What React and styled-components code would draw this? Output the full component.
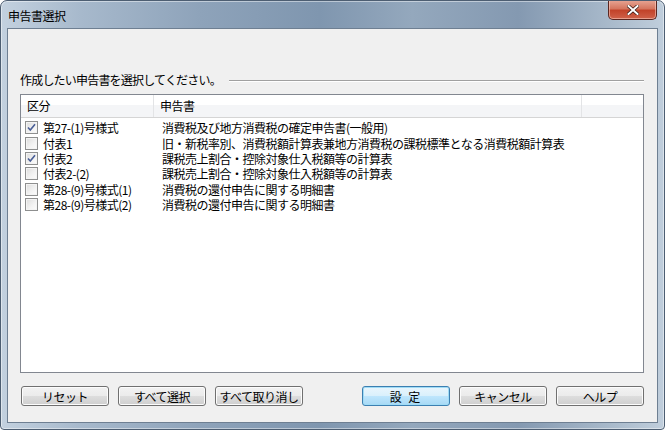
import React from 'react'
import styled, { createGlobalStyle } from 'styled-components'

const rows = [
  { kind: '第27-(1)号様式', name: '消費税及び地方消費税の確定申告書(一般用)', checked: true },
  { kind: '付表1', name: '旧・新税率別、消費税額計算表兼地方消費税の課税標準となる消費税額計算表', checked: false },
  { kind: '付表2', name: '課税売上割合・控除対象仕入税額等の計算表', checked: true },
  { kind: '付表2-(2)', name: '課税売上割合・控除対象仕入税額等の計算表', checked: false },
  { kind: '第28-(9)号様式(1)', name: '消費税の還付申告に関する明細書', checked: false },
  { kind: '第28-(9)号様式(2)', name: '消費税の還付申告に関する明細書', checked: false },
]

const App = () => (
  <>
    <GlobalStyle />
    <Window>
      <TitleBar>
        <Title>申告書選択</Title>
        <CloseButton>
          <svg width="12" height="10" viewBox="0 0 12 10">
            <path d="M1.5 1 L10.5 9 M10.5 1 L1.5 9" stroke="#3a1a14" strokeWidth="3.4" strokeLinecap="square" />
            <path d="M1.5 1 L10.5 9 M10.5 1 L1.5 9" stroke="#fff" strokeWidth="2" strokeLinecap="square" />
          </svg>
        </CloseButton>
      </TitleBar>
      <Client>
        <GroupLabel>
          <span>作成したい申告書を選択してください。</span>
          <Rule />
        </GroupLabel>
        <ListBox>
          <HeaderRow>
            <HeaderCell width={133}>区分</HeaderCell>
            <HeaderCell width={428}>申告書</HeaderCell>
            <HeaderCell grow />
          </HeaderRow>
          <Rows>
            {rows.map((r) => (
              <Row key={r.kind}>
                <KindCell>
                  <CheckBox checked={r.checked}>
                    {r.checked && (
                      <svg width="9" height="9" viewBox="0 0 9 9">
                        <path d="M1 4.5 L3.3 7 L8 1.2" fill="none" stroke="#4a5f97" strokeWidth="1.6" />
                      </svg>
                    )}
                  </CheckBox>
                  {r.kind}
                </KindCell>
                <NameCell>{r.name}</NameCell>
              </Row>
            ))}
          </Rows>
        </ListBox>
        <ButtonBar>
          <ButtonGroup>
            <Button>リセット</Button>
            <Button>すべて選択</Button>
            <Button>すべて取り消し</Button>
          </ButtonGroup>
          <ButtonGroup>
            <Button primary>設 定</Button>
            <Button>キャンセル</Button>
            <Button>ヘルプ</Button>
          </ButtonGroup>
        </ButtonBar>
      </Client>
    </Window>
  </>
)

export default App

const GlobalStyle = createGlobalStyle`
  html, body {
    margin: 0;
    padding: 0;
    background: #ffffff;
  }
  body {
    font-family: "Noto Sans CJK JP", "Liberation Sans", sans-serif;
    font-size: 12px;
    letter-spacing: -0.5px;
    color: #000;
  }
`

const Window = styled.div`
  box-sizing: border-box;
  width: 665px;
  height: 430px;
  display: flex;
  flex-direction: column;
  border: 1px solid #4d5e72;
  border-radius: 7px 7px 4px 4px;
  background:
    linear-gradient(90deg, #c3d1df 0%, #a7b9cc 12%, #8ea3ba 30%, #7f96af 48%, #94a8bd 62%, #8499b1 78%, #a9bacb 92%, #c0cedc 100%);
  box-shadow: inset 0 0 0 1px rgba(255, 255, 255, 0.45);
  overflow: hidden;
`

const TitleBar = styled.div`
  height: 27px;
  display: flex;
  align-items: flex-start;
  justify-content: space-between;
  padding: 0 7px 0 7px;
`

const Title = styled.div`
  margin-top: 8px;
  font-size: 12px;
  line-height: 14px;
  color: #000;
`

const CloseButton = styled.div`
  width: 47px;
  height: 19px;
  margin-top: -1px;
  display: flex;
  align-items: center;
  justify-content: center;
  border: 1px solid #5a2620;
  border-top: none;
  border-radius: 0 0 5px 5px;
  background: linear-gradient(180deg, #e8a796 0%, #d5765f 45%, #c2432a 55%, #d0624a 100%);
  box-shadow: inset 0 0 0 1px rgba(255, 220, 210, 0.5);
`

const Client = styled.div`
  flex: 1;
  margin: 0 6px 6px 6px;
  display: flex;
  flex-direction: column;
  padding: 44px 13px 0 12px;
  background: #f0f0f0;
  border: 1px solid #6e7f92;
`

const GroupLabel = styled.div`
  display: flex;
  align-items: center;
  height: 14px;
  line-height: 14px;
  font-size: 12px;
  letter-spacing: -0.8px;
  white-space: nowrap;
`

const Rule = styled.div`
  flex: 1;
  margin-left: 8px;
  margin-top: 1px;
  height: 0;
  border-top: 1px solid #a0a0a0;
  border-bottom: 1px solid #ffffff;
`

const ListBox = styled.div`
  margin-top: 7px;
  height: 279px;
  box-sizing: border-box;
  background: #ffffff;
  border: 1px solid #828790;
  display: flex;
  flex-direction: column;
`

const HeaderRow = styled.div`
  display: flex;
  height: 22px;
  border-bottom: 1px solid #d5d5d5;
  background: linear-gradient(180deg, #ffffff 0%, #ffffff 45%, #f4f5f7 46%, #f4f5f7 100%);
`

const HeaderCell = styled.div`
  box-sizing: border-box;
  ${(p) => (p.grow ? 'flex: 1;' : `width: ${p.width}px; flex-shrink: 0;`)}
  padding-left: 6px;
  line-height: 22px;
  font-size: 12px;
  border-right: ${(p) => (p.grow ? 'none' : '1px solid #e3e4e6')};
`

const Rows = styled.div`
  padding-top: 2px;
  display: flex;
  flex-direction: column;
`

const Row = styled.div`
  display: flex;
  height: 15.4px;
  align-items: center;
  white-space: nowrap;
  overflow: hidden;
  font-size: 12px;
`

const KindCell = styled.div`
  box-sizing: border-box;
  width: 133px;
  flex-shrink: 0;
  display: flex;
  align-items: center;
  padding-left: 4px;
  gap: 5px;
`

const NameCell = styled.div`
  padding-left: 8px;
`

const CheckBox = styled.span`
  box-sizing: border-box;
  width: 13px;
  height: 13px;
  flex-shrink: 0;
  display: inline-flex;
  align-items: center;
  justify-content: center;
  border: 1px solid #8e8f8f;
  background: linear-gradient(135deg, #dcdcdc 0%, #f3f3f3 60%, #fcfcfc 100%);
  box-shadow: inset 0 0 0 1px #f4f4f4;
`

const ButtonBar = styled.div`
  display: flex;
  justify-content: space-between;
  margin-top: 13px;
  padding-left: 1px;
`

const ButtonGroup = styled.div`
  display: flex;
  gap: 9px;
`

const Button = styled.div`
  box-sizing: border-box;
  width: 88px;
  height: 20px;
  display: flex;
  align-items: center;
  justify-content: center;
  font-size: 12px;
  letter-spacing: ${(p) => (p.primary ? '2px' : '-0.5px')};
  white-space: pre;
  border-radius: 3px;
  border: 1px solid ${(p) => (p.primary ? '#3c7fb1' : '#707070')};
  background: ${(p) =>
    p.primary
      ? 'linear-gradient(180deg, #eaf6fd 0%, #d9f0fc 50%, #bee6fd 51%, #a7d9f5 100%)'
      : 'linear-gradient(180deg, #f2f2f2 0%, #ebebeb 50%, #dddddd 51%, #cfcfcf 100%)'};
  box-shadow: inset 0 0 0 1px ${(p) => (p.primary ? '#a0dcf6' : '#fcfcfc')};
`
